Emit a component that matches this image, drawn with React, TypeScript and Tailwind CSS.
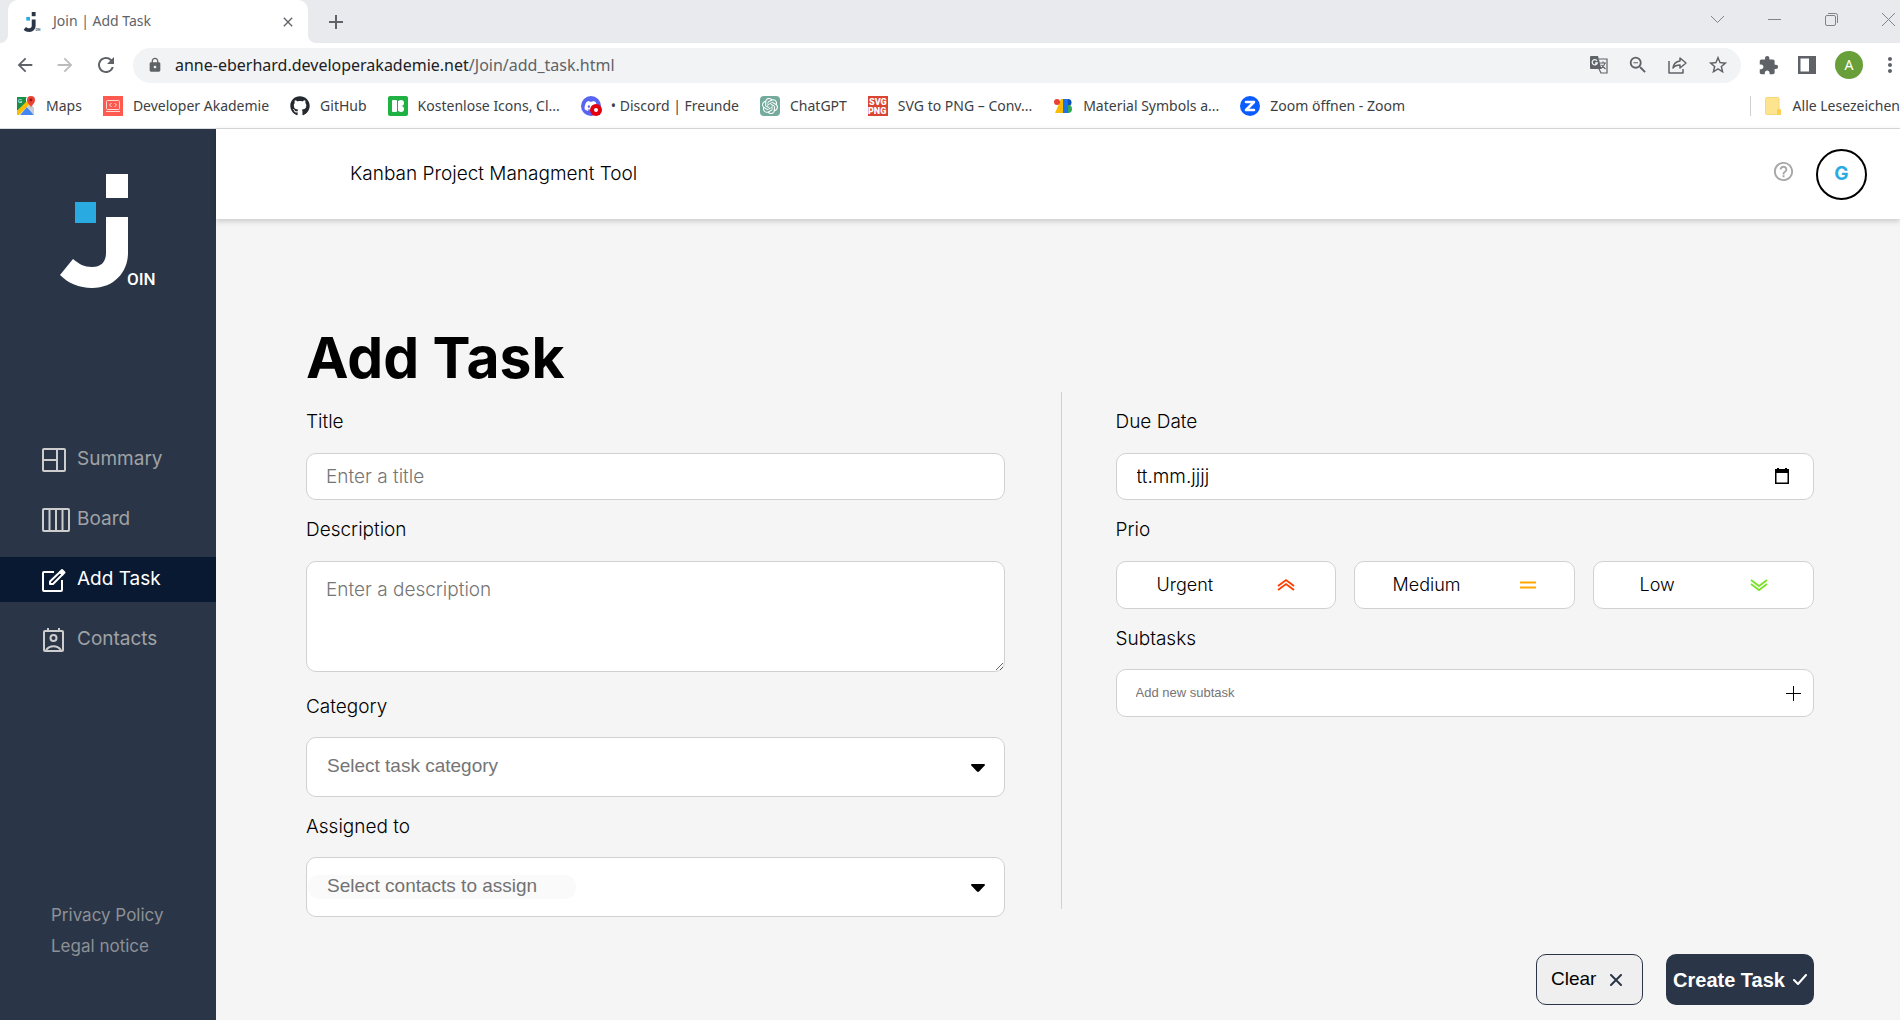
import React from "react";
import {
  MdArrowBack,
  MdArrowForward,
  MdRefresh,
  MdLock,
  MdZoomOut,
  MdStarBorder,
  MdExtension,
  MdMoreVert,
  MdHelpOutline,
  MdClose,
  MdAdd,
} from "react-icons/md";
import { SiOpenai } from "react-icons/si";
import { FaGithub, FaDiscord } from "react-icons/fa";

function JoinMark({ dark = false, className }: { dark?: boolean; className: string }) {
  const main = dark ? "#2a3647" : "#ffffff";
  return (
    <svg viewBox="0 0 95 114" className={className} aria-hidden="true">
      <path fill={main} d="M46 0h22v24H46z" />
      <path fill="#29abe2" d="M15 28h21v21H15z" />
      <path
        fill={main}
        d="M46 43h22v36c0 18-13 35-36 35C19 114 8 109 0 101l13-16c6 5 11 8 19 8 9 0 14-5 14-14z"
      />
      <text x="67" y="111" fontSize="17" fontFamily="Roboto, sans-serif" fontWeight="500" fill={main}>
        OIN
      </text>
    </svg>
  );
}

const MapsIcon = () => (
  <svg viewBox="0 0 20 20" className="size-5">
    <path fill="#34a853" d="M1 1h10L1 13z" />
    <path fill="#1a8f48" d="M1 1h9v6L1 15z" />
    <path fill="#fbbc04" d="M1 15 13 3l3 3L3 19H1z" />
    <path fill="#4285f4" d="M4 19 11 11l7 8z" />
    <path fill="#c8cdd3" d="m11 11 4-4 3 5v7z" />
    <text x="2" y="7" fontSize="6" fill="#fff" fontFamily="Roboto, sans-serif">G</text>
    <path fill="#ea4335" d="M15 12c0-3-4-4-4-8a4 4 0 0 1 8 0c0 4-4 5-4 8z" />
    <circle cx="15" cy="4" r="1.4" fill="#8c1a11" />
  </svg>
);
const AkademieIcon = () => (
  <svg viewBox="0 0 20 20" className="size-5">
    <path fill="#ff5a4f" d="M0 0h20v20H0z" />
    <g fill="none" stroke="#ffd9d5">
      <rect x="3.5" y="4.500" width="13" height="9" rx="1" />
      <path d="M3 15.500h14M8.500 7 6.500 9l2 2M11.500 7l2 2-2 2" />
    </g>
  </svg>
);
const Icons8Icon = () => (
  <svg viewBox="0 0 20 20" className="size-5">
    <rect width="20" height="20" rx="2" fill="#1fb141" />
    <g fill="#fff">
      <rect x="4" y="4" width="5" height="12" rx="1" />
      <circle cx="13" cy="7" r="3" />
      <circle cx="13" cy="13" r="3" />
      <path d="M10 5h3v10h-3z" />
    </g>
  </svg>
);
const DiscordIcon = () => (
  <span className="relative block size-5">
    <span className="flex size-5 items-center justify-center rounded-full bg-[#5865f2]">
      <FaDiscord className="size-3.5 text-white" />
    </span>
    <svg viewBox="0 0 12 12" className="absolute -right-px bottom-0 size-3">
      <circle cx="6" cy="6" r="6" fill="#e3000f" />
      <circle cx="6" cy="6" r="2" fill="#fff" />
    </svg>
  </span>
);
const ChatIcon = () => (
  <span className="flex size-5 items-center justify-center rounded-sm bg-[#74aa9c]">
    <SiOpenai className="size-4 text-white" />
  </span>
);
const SvgPngIcon = () => (
  <svg viewBox="0 0 20 20" className="size-5" fontFamily="Roboto, sans-serif" fontWeight="900" fontSize="9" fill="#fff">
    <path fill="#d94532" d="M0 0h20v20H0z" />
    <text x="1" y="9">SVG</text>
    <text x="0" y="18">PNG</text>
  </svg>
);
const MaterialIcon = () => (
  <svg viewBox="0 0 20 20" className="size-5">
    <path fill="#fbbc04" d="M8 3h3v14H2z" />
    <circle cx="4" cy="6" r="3" fill="#ea4335" />
    <path fill="#1a73e8" d="M10 3h5v14h-5z" />
    <path fill="#0d4fb8" d="M15 3a3.500 3.500 0 0 1 0 7z" />
    <path fill="#34a853" d="M15 9a4 4 0 0 1 0 8z" />
  </svg>
);
const ZoomIcon = () => (
  <svg viewBox="0 0 20 20" className="size-5">
    <circle cx="10" cy="10" r="10" fill="#0b5cff" />
    <path d="M6 6h8l-8 8h8" fill="none" stroke="#fff" strokeWidth="2.600" strokeLinejoin="round" strokeLinecap="round" />
  </svg>
);

const bookmarks = [
  { label: "Maps", icon: <MapsIcon /> },
  { label: "Developer Akademie", icon: <AkademieIcon /> },
  { label: "GitHub", icon: <FaGithub className="size-5 text-[#24292f]" /> },
  { label: "Kostenlose Icons, Cl...", icon: <Icons8Icon /> },
  { label: "• Discord | Freunde", icon: <DiscordIcon /> },
  { label: "ChatGPT", icon: <ChatIcon /> },
  { label: "SVG to PNG – Conv...", icon: <SvgPngIcon /> },
  { label: "Material Symbols a...", icon: <MaterialIcon /> },
  { label: "Zoom öffnen - Zoom", icon: <ZoomIcon /> },
];

function BrowserChrome() {
  return (
    <div className="flex shrink-0 flex-col border-b border-[#dadce0] bg-white font-['Noto_Sans',sans-serif] text-[#5f6368]">
      <div className="flex h-[43px] items-stretch bg-[#e8eaed]">
        <div className="w-2 bg-white">
          <div className="size-full rounded-br-lg bg-[#e8eaed]" />
        </div>
        <div className="flex w-[300px] items-center rounded-t-[10px] bg-white pr-3 pl-3.5">
          <JoinMark dark className="h-5 w-5" />
          <span className="ml-[11px] flex-1 pb-0.5 text-sm">Join | Add Task</span>
          <button aria-label="Close tab" className="flex size-4 items-center justify-center">
            <MdClose className="size-4" />
          </button>
        </div>
        <div className="flex flex-1 bg-white">
          <div className="flex flex-1 items-center rounded-bl-lg bg-[#e8eaed] pl-4">
            <button aria-label="New tab">
              <MdAdd className="size-6" />
            </button>
            <div className="ml-auto flex items-center gap-11 pr-[5px] pb-1 text-[#808388]">
              <button aria-label="Search tabs">
                <svg viewBox="0 0 13 13" className="size-[13px]" fill="none" stroke="currentColor"><path d="m0 3 6.500 6.500L13 3" /></svg>
              </button>
              <button aria-label="Minimize">
                <svg viewBox="0 0 13 13" className="size-[13px]" fill="none" stroke="currentColor"><path d="M0 6.500h13" /></svg>
              </button>
              <button aria-label="Restore">
                <svg viewBox="0 0 13 13" className="size-[13px]" fill="none" stroke="currentColor"><rect x=".5" y="2.500" width="10" height="10" rx="1.500" /><path d="M3 .5h7.500a2 2 0 0 1 2 2V10" /></svg>
              </button>
              <button aria-label="Close window">
                <svg viewBox="0 0 13 13" className="size-[13px]" fill="none" stroke="currentColor"><path d="m0 0 13 13M13 0 0 13" /></svg>
              </button>
            </div>
          </div>
        </div>
      </div>
      <div className="flex h-11 items-center pl-[14px]">
        <button aria-label="Back"><MdArrowBack className="size-[22px]" /></button>
        <button aria-label="Forward" className="ml-[18px] text-[#babcbe]"><MdArrowForward className="size-[22px]" /></button>
        <button aria-label="Reload" className="ml-[18px]"><MdRefresh className="size-6" /></button>
        <div className="ml-[15px] flex h-[35px] flex-1 items-center rounded-full bg-[#f1f3f4] pr-3 pl-3.5">
          <MdLock className="size-4" />
          <a href="#url" className="ml-3 flex-1 text-base">
            <span className="text-[#202124]">anne-eberhard.developerakademie.net</span>/Join/add_task.html
          </a>
          <div className="flex items-center gap-[19px]">
            <button aria-label="Translate">
              <svg viewBox="0 0 18 18" className="size-[18px]">
                <path fill="currentColor" d="M1 0h7l3.500 13H1a1 1 0 0 1-1-1V1a1 1 0 0 1 1-1z" />
                <path fill="none" stroke="currentColor" strokeWidth="1.200" d="M9 3h8v14h-6l-2-4M10 7h6M13 5.500V7M15 7c-.5 2.500-2 4-4 5.500M11.500 9l4 4" />
                <path fill="none" stroke="#f1f3f4" strokeWidth="1.300" d="M7 4.800A2.600 2.600 0 1 0 7.300 7H5" />
              </svg>
            </button>
            <button aria-label="Zoom"><MdZoomOut className="size-[22px]" /></button>
            <button aria-label="Share">
              <svg viewBox="0 0 20 18" className="h-[18px] w-5" fill="none" stroke="currentColor" strokeWidth="1.500" strokeLinejoin="round">
                <path d="M1 5v12h14v-4" />
                <path d="M5 12c.5-4 3-6.500 7-7V2l6 5-6 5V9c-3 0-5.500 1-7 3z" />
              </svg>
            </button>
            <button aria-label="Bookmark"><MdStarBorder className="size-[22px]" /></button>
          </div>
        </div>
        <div className="flex items-center gap-[19px] pl-[17px]">
          <button aria-label="Extensions"><MdExtension className="size-[21px]" /></button>
          <button aria-label="Side panel">
            <svg viewBox="0 0 18 18" className="size-[18px]" fill="currentColor"><path fillRule="evenodd" d="M0 0h18v18H0zM2.500 2.500v13H11v-13z" /></svg>
          </button>
          <button aria-label="Profile" className="flex size-7 items-center justify-center rounded-full bg-[#689f38] text-sm text-white">A</button>
          <button aria-label="Menu" className="-mr-0.5 -ml-1"><MdMoreVert className="size-6" /></button>
        </div>
      </div>
      <nav className="flex h-[41px] items-center gap-[21px] overflow-hidden pb-1 pl-4 text-sm whitespace-nowrap text-[#3c4043]">
        {bookmarks.map((b) => (
          <a key={b.label} href="#bookmark" className="flex items-center gap-2.5">
            {b.icon}
            {b.label}
          </a>
        ))}
        <a href="#all" className="ml-auto flex h-5 shrink-0 items-center gap-3 border-l border-[#cfd1d4] pl-3.5">
          <svg viewBox="0 0 16 18" className="h-[18px] w-4">
            <rect x=".5" y=".5" width="13.500" height="17" rx="1" fill="#ffe48f" stroke="#f8d775" />
            <rect x="12" y="12" width="4" height="6" rx="1" fill="#fbd04f" />
          </svg>
          Alle Lesezeichen
        </a>
      </nav>
    </div>
  );
}

const strokeIcon = { fill: "none", stroke: "currentColor", strokeWidth: 2 } as const;
const navItems = [
  {
    label: "Summary",
    active: false,
    icon: (
      <svg viewBox="0 0 24 24" className="size-6" {...strokeIcon}>
        <rect x="1" y="1" width="22" height="22" rx="1" />
        <path d="M15 1v22M1 12h14" />
      </svg>
    ),
  },
  {
    label: "Board",
    active: false,
    icon: (
      <svg viewBox="0 0 28 24" className="h-6 w-7" {...strokeIcon}>
        <rect x="1" y="1" width="26" height="22" rx="1" />
        <path d="M7.500 1v22M14 1v22M20.500 1v22" />
      </svg>
    ),
  },
  {
    label: "Add Task",
    active: true,
    icon: (
      <svg viewBox="0 0 24 24" className="size-6" {...strokeIcon}>
        <path d="M12 4H2a1 1 0 0 0-1 1v17a1 1 0 0 0 1 1h17a1 1 0 0 0 1-1V12" />
        <path d="M8 13.500 18 4l2.500 2.500L11 16H8z" strokeLinejoin="round" />
        <path d="m18 4 2-2 2.500 2.500-2 2z" fill="currentColor" strokeLinejoin="round" />
      </svg>
    ),
  },
  {
    label: "Contacts",
    active: false,
    icon: (
      <svg viewBox="0 0 24 24" className="size-6" {...strokeIcon}>
        <rect x="2" y="3" width="19" height="20" rx="1" />
        <path d="M6 0v3M17 0v3M4 22c4-5 11-5 15 0" />
        <circle cx="11.500" cy="10" r="3" />
      </svg>
    ),
  },
];

function Sidebar() {
  return (
    <aside className="flex w-[216px] shrink-0 flex-col bg-[#2a3647] pt-[45px] font-['Inter',sans-serif]">
      <JoinMark className="ml-[60px] h-[114px] w-[95px]" />
      <nav className="mt-[149px] flex flex-col gap-[15px] text-[19px]">
        {navItems.map((item) => (
          <a
            key={item.label}
            href="#nav"
            className={
              item.active
                ? "flex h-[45px] items-center bg-[#091931] pl-[42px] text-white"
                : "flex h-[45px] items-center pl-[42px] text-[#cdcdcd]"
            }
          >
            <span className="w-[35px]">{item.icon}</span>
            <span className={item.active ? "" : "text-[#a0a2a6]"}>{item.label}</span>
          </a>
        ))}
      </nav>
      <div className="mt-auto flex flex-col gap-1 pb-[60px] pl-[51px] text-[17px] leading-[27px] text-[#8d9096]">
        <a href="#privacy">Privacy Policy</a>
        <a href="#legal">Legal notice</a>
      </div>
    </aside>
  );
}

function PageHeader() {
  return (
    <header className="z-10 flex h-[90px] shrink-0 items-center bg-white pr-[33px] pl-[134px] font-['Inter',sans-serif] shadow-[0_2px_6px_rgba(0,0,0,0.2)]">
      <span className="text-[19px] font-light text-black">Kanban Project Managment Tool</span>
      <a href="#help" aria-label="Help" className="mr-[21px] mb-1.5 ml-auto text-[#a8a8a8]">
        <MdHelpOutline className="size-[23px]" />
      </a>
      <button className="flex size-[51px] items-center justify-center rounded-full border-2 border-black text-[19px] font-bold text-[#29abe2]">
        G
      </button>
    </header>
  );
}

const labelClass = "flex h-[61px] items-center text-[19px] font-light text-black";
const boxClass = "w-full rounded-[10px] border border-[#d1d1d1] bg-white";

function SelectField({ id, label, text, chip }: { id: string; label: string; text: string; chip?: boolean }) {
  return (
    <>
      <label htmlFor={id} className="flex h-[60px] items-center text-[19px] font-light text-black">{label}</label>
      <div className="relative">
        <select
          id={id}
          className={`${boxClass} block h-[60px] appearance-none px-5 pb-0.5 font-['Liberation_Sans',sans-serif] text-[19px] text-[#757575]`}
        >
          <option>{text}</option>
        </select>
        <svg viewBox="0 0 14 8" className="pointer-events-none absolute top-[27px] right-5 h-2 w-3.5">
          <path d="M1 0h12a1 1 0 0 1 .7 1.500L8 7.500a1.500 1.500 0 0 1-2 0L.3 1.500A1 1 0 0 1 1 0z" />
        </svg>
        {chip && <span className="pointer-events-none absolute top-[18px] left-0.5 h-6 w-[268px] rounded-[10px] bg-black/[0.02]" />}
      </div>
    </>
  );
}

const priorities = [
  { label: "Urgent", color: "text-[#ff3d00]", d: "m1 8 8-6 8 6M1 12l8-6 8 6" },
  { label: "Medium", color: "text-[#ffa800]", d: "M1 4.500h16M1 9.500h16" },
  { label: "Low", color: "text-[#7ae229]", d: "m1 2 8 6 8-6M1 6l8 6 8-6" },
];

function TaskForm() {
  return (
    <main className="flex flex-1 flex-col bg-[#f5f5f5] pt-[104px] pr-[86px] pb-[15px] pl-[90px] font-['Inter',sans-serif]">
      <h1 className="text-[57px] leading-[69px] font-bold text-black">Add Task</h1>
      <form className="flex flex-1 flex-col">
        <div className="flex">
          <div className="flex-1">
            <label htmlFor="title" className={labelClass}>Title</label>
            <input id="title" placeholder="Enter a title" className={`${boxClass} block h-[47px] px-[19px] text-[19px] font-light placeholder:text-[#757575]`} />
            <label htmlFor="description" className={labelClass}>Description</label>
            <textarea
              id="description"
              placeholder="Enter a description"
              className={`${boxClass} block h-[111px] resize px-[19px] py-3.5 text-[19px] font-light placeholder:text-[#757575]`}
            />
            <div className="h-[5px]" />
            <SelectField id="category" label="Category" text="Select task category" />
            <SelectField id="assigned" label="Assigned to" text="Select contacts to assign" chip />
          </div>
          <div className="mr-[54px] mb-2 ml-14 w-px bg-[#d1d1d1]" />
          <div className="flex-1">
            <label htmlFor="due" className={labelClass}>Due Date</label>
            <div className="relative">
              <input id="due" type="text" defaultValue="tt.mm.jjjj" className={`${boxClass} block h-[47px] px-5 text-[19px] font-light text-black`} />
              <svg viewBox="0 0 16 16" className="pointer-events-none absolute top-[15px] right-6 size-4">
                <path fillRule="evenodd" d="M3 0h2v1h6V0h2v1h2v15H1V1h2zm-.5 5v9.500h11V5z" />
              </svg>
            </div>
            <p className={labelClass}>Prio</p>
            <div className="flex gap-[18px]">
              {priorities.map((p) => (
                <button key={p.label} type="button" className="flex h-12 flex-1 items-center justify-around rounded-[10px] border border-[#d1d1d1] bg-white px-2 text-lg font-light text-black">
                  {p.label}
                  <svg viewBox="0 0 18 14" className={`${p.color} h-3.5 w-[18px]`} fill="none" stroke="currentColor" strokeWidth="1.800">
                    <path d={p.d} />
                  </svg>
                </button>
              ))}
            </div>
            <label htmlFor="subtask" className="flex h-[60px] items-center text-[19px] font-light text-black">Subtasks</label>
            <div className={`${boxClass} flex h-12 items-center pr-3 pl-[19px]`}>
              <input id="subtask" placeholder="Add new subtask" className="flex-1 font-['Liberation_Sans',sans-serif] text-[13px] outline-none placeholder:text-[#757575]" />
              <button type="button" aria-label="Add subtask">
                <svg viewBox="0 0 15 15" className="size-[15px]" fill="none" stroke="#000"><path d="M7.500 0v15M0 7.500h15" /></svg>
              </button>
            </div>
          </div>
        </div>
        <div className="mt-auto flex justify-end gap-[23px] font-['Liberation_Sans',sans-serif]">
          <button type="button" className="flex h-[51px] w-[107px] items-center gap-3.5 rounded-[10px] border border-[#2a3647] bg-[#efefef] pl-3.5 text-[19px] text-black">
            Clear
            <svg viewBox="0 0 12 12" className="size-3" fill="none" stroke="#2a3647" strokeWidth="2" strokeLinecap="round"><path d="m1 1 10 10M11 1 1 11" /></svg>
          </button>
          <button type="submit" className="flex h-[51px] w-[148px] items-center justify-center gap-2 rounded-[10px] bg-[#2a3647] text-xl font-bold text-white">
            Create Task
            <svg viewBox="0 0 14 11" className="h-[11px] w-3.5" fill="none" stroke="#fff" strokeWidth="2" strokeLinecap="round" strokeLinejoin="round"><path d="m1 6 4 4 8-9" /></svg>
          </button>
        </div>
      </form>
    </main>
  );
}

export default function App() {
  return (
    <div className="flex min-h-screen flex-col overflow-hidden">
      <BrowserChrome />
      <div className="flex flex-1">
        <Sidebar />
        <div className="flex min-w-0 flex-1 flex-col">
          <PageHeader />
          <TaskForm />
        </div>
      </div>
    </div>
  );
}
